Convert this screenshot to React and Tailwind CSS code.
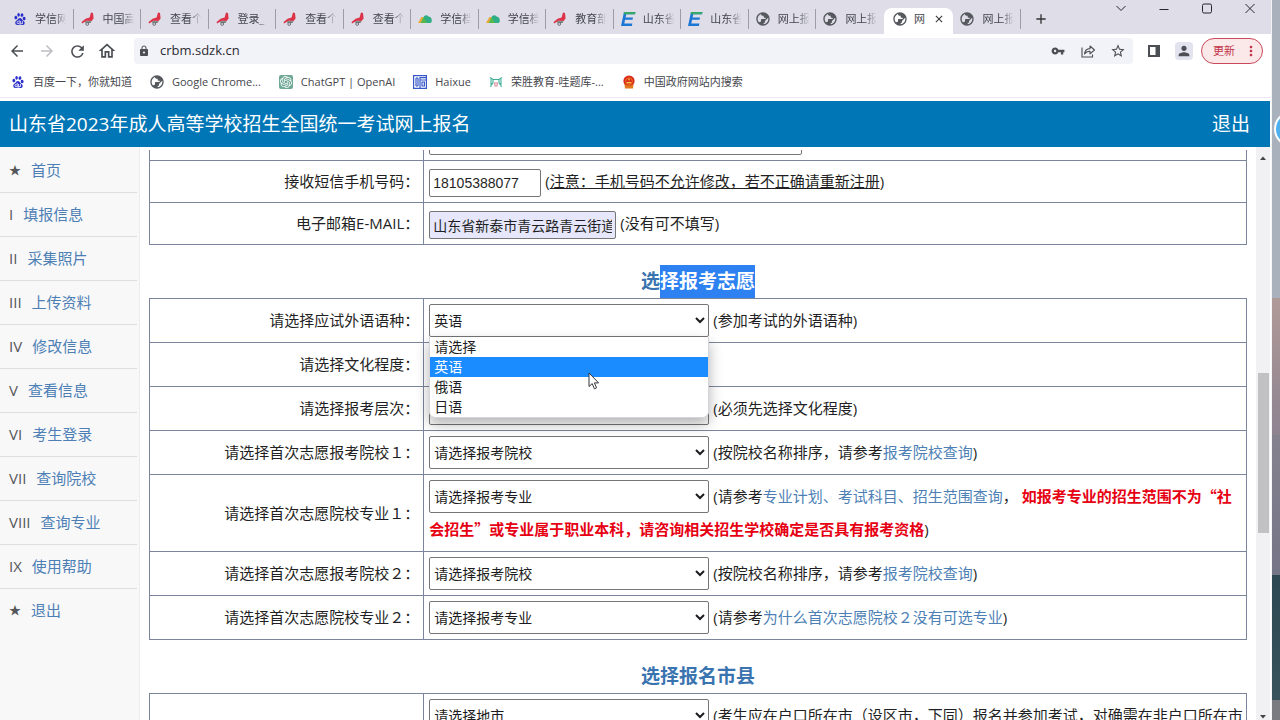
import React, { useState } from 'react';
import {
  MdArrowBack,
  MdArrowForward,
  MdRefresh,
  MdOutlineHome,
  MdLock,
  MdVpnKey,
  MdStarBorder,
  MdPublic,
  MdPerson,
  MdMoreVert,
  MdAdd,
  MdClose,
} from 'react-icons/md';
import { SiBaidu, SiOpenai } from 'react-icons/si';

// ---------- favicons ----------

function RedBirdIcon() {
  return (
    <svg className="w-3.5 h-3.5" viewBox="0 0 14 14">
      <path d="M10 0.4 L12 1 L12.6 6.4 L10.6 9 L5.8 8.8 L1 11.4 L0.6 10 L4.6 6.8 L8.6 5.4 Z" fill="#dc3348" />
      <path d="M4 9.2 H10.6 L9.4 11 H4.6 Z" fill="#6d7474" />
      <circle cx="6.2" cy="12" r="1.4" fill="none" stroke="#6d7474" strokeWidth="1" />
    </svg>
  );
}

function GreenHillIcon() {
  return (
    <svg className="w-3.5 h-3.5" viewBox="0 0 14 14">
      <path d="M0 11 L3.4 5 L5.4 5 L4 11 Z" fill="#e7a83a" />
      <path d="M3 11 L6 4.2 Q8.6 2 10.6 4.6 Q13.8 5.4 13.8 8.4 Q13.8 11 11.4 11 Z" fill="#2fae86" />
      <path d="M3 11 L5.4 5.6 L9 11 Z" fill="#57b947" />
    </svg>
  );
}

function BlueEIcon() {
  return (
    <svg className="w-4 h-4" viewBox="0 0 16 16">
      <path d="M4 1 H15.5 L14.9 3.2 H6.3 L5.6 6.4 H13 L12.5 8.8 H5.1 L4.3 12.6 H12.4 L11.8 15 H1 Z" fill="#1c77d4" />
      <path d="M4 1 H15.5 L14.9 3.2 H3.5 Z" fill="#35a86a" />
    </svg>
  );
}

function HaixueIcon() {
  return (
    <svg className="w-3.5 h-3.5" viewBox="0 0 14 14" fill="none" stroke="#3758c8" strokeWidth="1.2">
      <path d="M0.6 0.6 H13.4 V13.4 H0.6 Z" />
      <path d="M3 3 V11 M5 3 V11 M3 3 H5 M3 11 H5 M7 13 V2.6 H13 M7 5 H13 M9 7 H11.4 V11 H9 Z" />
    </svg>
  );
}

function QuizIcon() {
  return (
    <svg className="w-3.5 h-3.5" viewBox="0 0 14 14" fill="none" stroke="#3fae98" strokeWidth="1.1">
      <path d="M1 2.5 L4 4.5 H10 L13 2.5 M2 4 V12 M12 4 V12 M4 4.5 V8 L2 10 M10 4.5 V8 L12 10" />
      <path d="M5.6 8 H8.4 L8 11 H6 Z" stroke="#d98b9b" />
    </svg>
  );
}

function EmblemIcon() {
  return (
    <svg className="w-3.5 h-3.5" viewBox="0 0 14 14">
      <circle cx="7" cy="6" r="5.6" fill="#d8281c" />
      <path d="M2.4 9 Q7 12 11.6 9 L11 13.4 H3 Z" fill="#e07a1e" />
      <circle cx="7" cy="6.2" r="3.4" fill="none" stroke="#ee8a24" strokeWidth="0.8" />
      <path d="M4.8 7.6 H9.2 M7 3.8 V5.6" stroke="#ffd34d" strokeWidth="1.2" />
    </svg>
  );
}

const favicons = {
  baidu: <SiBaidu className="w-3 h-3.5 text-[#2b2fc9]" />,
  bird: <RedBirdIcon />,
  hill: <GreenHillIcon />,
  e: <BlueEIcon />,
  globe: <MdPublic className="w-4 h-4 text-[#55585d] -scale-x-100" />,
  gpt: (
    <span className="flex w-3.5 h-3.5 items-center justify-center rounded-xs bg-[#6fa896]">
      <SiOpenai className="w-3 h-3 text-white" />
    </span>
  ),
  haixue: <HaixueIcon />,
  quiz: <QuizIcon />,
  emblem: <EmblemIcon />,
};

// ---------- browser chrome ----------

const tabs = [
  { icon: 'baidu', title: '学信网' },
  { icon: 'bird', title: '中国高' },
  { icon: 'bird', title: '查看个' },
  { icon: 'bird', title: '登录_' },
  { icon: 'bird', title: '查看个' },
  { icon: 'bird', title: '查看个' },
  { icon: 'hill', title: '学信档' },
  { icon: 'hill', title: '学信档' },
  { icon: 'bird', title: '教育部' },
  { icon: 'e', title: '山东省' },
  { icon: 'e', title: '山东省' },
  { icon: 'globe', title: '网上报' },
  { icon: 'globe', title: '网上报' },
  { icon: 'globe', title: '网', active: true },
  { icon: 'globe', title: '网上报' },
];

const bookmarks = [
  { icon: 'baidu', title: '百度一下，你就知道' },
  { icon: 'globe', title: 'Google Chrome...' },
  { icon: 'gpt', title: 'ChatGPT | OpenAI' },
  { icon: 'haixue', title: 'Haixue' },
  { icon: 'quiz', title: '荣胜教育-哇题库-...' },
  { icon: 'emblem', title: '中国政府网站内搜索' },
];

function Tab({ icon, title, active, divider }) {
  return (
    <div
      className={
        active
          ? 'flex flex-1 min-w-0 self-stretch mt-1 pb-1 items-center rounded-t-lg bg-white pl-2'
          : 'flex flex-1 min-w-0 items-center pl-1.5'
      }
    >
      <span className="flex w-4 shrink-0 justify-center">{favicons[icon]}</span>
      <span
        className={
          active
            ? 'ml-1.5 text-[11px] leading-4 text-[#45464c]'
            : 'ml-[7px] w-[33px] shrink-0 whitespace-nowrap text-[11px] leading-4 text-[#45464c] mask-r-from-60% mask-r-to-95%'
        }
      >
        {title}
      </span>
      {active && (
        <button aria-label="关闭标签页" className="ml-2 text-[#333]">
          <MdClose className="w-3 h-3" />
        </button>
      )}
      {divider && <span className="ml-auto h-5 w-px bg-[#9d9da8]"></span>}
    </div>
  );
}

function TabStrip() {
  return (
    <div className="flex h-[34px] bg-[#dedde8]">
      <div className="flex flex-1 min-w-0 items-center pl-1.5 pt-1">
        {tabs.map((tab, i) => (
          <Tab key={i} {...tab} divider={i !== 12 && i !== 13} />
        ))}
      </div>
      <div className="flex w-[250px] shrink-0">
        <button aria-label="新标签页" className="flex w-10 items-center justify-center pt-1 text-[#333]">
          <MdAdd className="w-4 h-4" />
        </button>
        <div className="ml-auto flex h-4 text-[#26262c]">
          <button aria-label="搜索标签页" className="flex w-[43px] items-center justify-center">
            <svg className="w-3 h-3" viewBox="0 0 12 12" fill="none" stroke="currentColor">
              <path d="M1.5 4 L6 8.5 L10.5 4" />
            </svg>
          </button>
          <button aria-label="最小化" className="flex w-[43px] items-center justify-center">
            <svg className="w-3 h-3" viewBox="0 0 12 12" stroke="currentColor">
              <path d="M1.5 7.5 H10.5" />
            </svg>
          </button>
          <button aria-label="最大化" className="flex w-[43px] items-center justify-center">
            <svg className="w-3 h-3" viewBox="0 0 12 12" fill="none" stroke="currentColor">
              <rect x="1.5" y="2" width="9" height="9" rx="1.5" />
            </svg>
          </button>
          <button aria-label="关闭" className="flex w-[43px] items-center justify-center">
            <svg className="w-3 h-3" viewBox="0 0 12 12" fill="none" stroke="currentColor">
              <path d="M1.5 2 L10.5 11 M10.5 2 L1.5 11" />
            </svg>
          </button>
        </div>
      </div>
    </div>
  );
}

function AddressBar() {
  const [url, setUrl] = useState('crbm.sdzk.cn');

  return (
    <div className="flex h-[34px] items-center pl-0.5 pr-2 text-[#4b4e53]">
      <button aria-label="后退" className="flex w-[30px] justify-center">
        <MdArrowBack className="w-[18px] h-[18px]" />
      </button>
      <button aria-label="前进" className="flex w-[30px] justify-center text-[#bdbec4]">
        <MdArrowForward className="w-[18px] h-[18px]" />
      </button>
      <button aria-label="重新加载" className="flex w-[30px] justify-center">
        <MdRefresh className="w-[19px] h-[19px]" />
      </button>
      <button aria-label="主页" className="flex w-[30px] justify-center">
        <MdOutlineHome className="w-5 h-5" />
      </button>
      <div className="ml-3 flex h-[26px] flex-1 items-center rounded-sm bg-[#f2f2f9]">
        <MdLock className="ml-1 w-3 h-3" />
        <input
          aria-label="地址栏"
          value={url}
          onChange={(e) => setUrl(e.target.value)}
          className="ml-2.5 min-w-0 flex-1 bg-transparent text-[13px] text-[#2c2d31] outline-none"
        />
        <button aria-label="密码" className="flex w-[30px] justify-center">
          <MdVpnKey className="w-3.5 h-3.5" />
        </button>
        <button aria-label="分享" className="flex w-[30px] justify-center">
          <svg className="w-4 h-4" viewBox="0 0 16 16" fill="none" stroke="currentColor" strokeWidth="1.1">
            <path d="M2 4.5 V14 H12.5 V11.5" />
            <path d="M4.5 11 Q5 5.8 10 5.6 V3 L14.5 7 L10 10.8 V8.2 Q6.5 8 4.5 11 Z" strokeLinejoin="round" />
          </svg>
        </button>
        <button aria-label="收藏" className="flex w-[30px] justify-center">
          <MdStarBorder className="w-4 h-4" />
        </button>
      </div>
      <button aria-label="侧边栏" className="ml-1.5 flex w-[30px] justify-center">
        <svg className="w-4 h-4" viewBox="0 0 16 16">
          <path d="M2 2 H14 V14 H2 Z M4 4 V12 H9.5 V4 Z" fill="currentColor" fillRule="evenodd" />
        </svg>
      </button>
      <button aria-label="个人资料" className="flex w-[30px] justify-center">
        <span className="flex w-[18px] h-[18px] items-center justify-center rounded-sm bg-[#e2e3ee]">
          <MdPerson className="w-4 h-4" />
        </span>
      </button>
      <button className="ml-0.5 flex h-[26px] w-[62px] items-center rounded-full border border-[#c9485b] bg-[#fbe9ea] pl-[11px] text-[11px] text-[#c23347]">
        更新
        <MdMoreVert className="ml-2 w-4 h-4" />
      </button>
    </div>
  );
}

function BookmarkBar() {
  return (
    <div className="flex h-[30px] items-center gap-[17px] border-b border-[#efe6f8] pl-2.5 pb-0.5 text-[11px] leading-4 text-[#45464c]">
      {bookmarks.map((b) => (
        <a key={b.title} href="#" className="flex items-center gap-[7px] whitespace-nowrap">
          <span className="flex w-4 justify-center">{favicons[b.icon]}</span>
          <span>{b.title}</span>
        </a>
      ))}
    </div>
  );
}

// ---------- page ----------

const menu = [
  { mark: '★', text: '首页' },
  { mark: 'I', text: '填报信息' },
  { mark: 'II', text: '采集照片' },
  { mark: 'III', text: '上传资料' },
  { mark: 'IV', text: '修改信息' },
  { mark: 'V', text: '查看信息' },
  { mark: 'VI', text: '考生登录' },
  { mark: 'VII', text: '查询院校' },
  { mark: 'VIII', text: '查询专业' },
  { mark: 'IX', text: '使用帮助' },
  { mark: '★', text: '退出' },
];

function SideMenu() {
  return (
    <nav className="w-[140px] shrink-0 border-r border-[#ececf0] bg-[#f8f8f9] pt-0.5">
      <ul>
        {menu.map((m, i) => (
          <li
            key={i}
            className={
              i === menu.length - 1
                ? 'flex h-11 items-center gap-2.5 pb-px pl-[9px]'
                : 'mr-0.5 flex h-11 items-center gap-2.5 border-b border-[#dfdfe2] pl-[9px]'
            }
          >
            <span className={m.mark === '★' ? 'text-xs text-[#55565a]' : 'text-[#55565a]'}>{m.mark}</span>
            <a href="#" className="text-[#4d7fb5]">{m.text}</a>
          </li>
        ))}
      </ul>
    </nav>
  );
}

function FormTable({ children }) {
  return (
    <table className="w-full table-fixed border-collapse">
      <colgroup>
        <col className="w-1/4" />
        <col />
      </colgroup>
      <tbody>{children}</tbody>
    </table>
  );
}

function Row({ id, label, compact, children }) {
  return (
    <tr>
      <th
        scope="row"
        className="border border-[#7b869c] pr-1 text-right font-normal leading-[33px]"
      >
        <label htmlFor={id}>{label}</label>
      </th>
      <td
        className={
          compact
            ? 'border border-[#7b869c] pl-[5px] py-1 leading-[33px]'
            : 'relative border border-[#7b869c] pl-[5px] py-[5px] leading-[33px]'
        }
      >
        {children}
      </td>
    </tr>
  );
}

function Select({ id, options, value }) {
  const [current, setCurrent] = useState(value || options[0]);

  return (
    <select
      id={id}
      value={current}
      onChange={(e) => setCurrent(e.target.value)}
      className="mr-1 h-[33px] w-[280px] rounded-xs border border-[#767676] bg-white align-top text-sm text-[#1c1c20]"
    >
      {options.map((o) => (
        <option key={o}>{o}</option>
      ))}
    </select>
  );
}

function PageLink({ children }) {
  return <a href="#" className="text-[#4d7fb5]">{children}</a>;
}

const languages = ['请选择', '英语', '俄语', '日语'];

function LanguageList() {
  return (
    <div className="absolute left-[5px] top-[38px] z-10 w-[280px] rounded-b-md border border-t-0 border-[#d4d4da] bg-white shadow-[0_6px_14px_rgba(0,0,0,0.3)]">
      <ul role="listbox" aria-label="外语语种" className="text-sm leading-5">
        {languages.map((l) => (
          <li
            key={l}
            role="option"
            aria-selected={l === '英语'}
            className={l === '英语' ? 'bg-[#1a8cff] pl-1 text-white' : 'pl-1'}
          >
            {l}
          </li>
        ))}
      </ul>
      <svg className="absolute left-[158px] top-[35px] w-3 h-[18px]" viewBox="0 0 12 18">
        <path
          d="M1 1 V14.5 L4.2 11.6 L6.4 16.8 L8.6 15.8 L6.4 10.9 H10.6 Z"
          fill="#fff"
          stroke="#33343a"
          strokeWidth="1"
        />
      </svg>
    </div>
  );
}

function SignUpForm() {
  const [address, setAddress] = useState('');
  const [phone, setPhone] = useState('18105388077');
  const [email, setEmail] = useState('山东省新泰市青云路青云街道');

  return (
    <main className="mt-[3px] ml-[9px] mr-[9px] min-w-0 flex-1 overflow-hidden">
      {/* the page is scrolled, so the first row is cut by the header */}
      <div className="-mt-8">
        <FormTable>
          <Row id="address" compact>
            <input
              id="address"
              aria-label="通讯地址"
              value={address}
              onChange={(e) => setAddress(e.target.value)}
              className="h-7 w-[373px] rounded-xs border border-[#767676] px-[3px] align-middle text-sm"
            />
          </Row>
          <Row id="phone" label="接收短信手机号码：" compact>
            <input
              id="phone"
              value={phone}
              onChange={(e) => setPhone(e.target.value)}
              className="mr-1 h-7 w-28 rounded-xs border border-[#767676] px-[3px] align-middle font-['Liberation_Sans',sans-serif] text-sm"
            />
            (<u>注意：手机号码不允许修改，若不正确请重新注册</u>)
          </Row>
          <Row id="email" label="电子邮箱E-MAIL：" compact>
            <input
              id="email"
              value={email}
              onChange={(e) => setEmail(e.target.value)}
              className="mr-1 h-7 w-[187px] rounded-xs border border-[#767676] bg-[#e6e7fa] px-[3px] align-middle text-sm"
            />
            (没有可不填写)
          </Row>
        </FormTable>
      </div>

      <h2 className="mt-5 text-center text-[19px] leading-[33px] font-bold text-[#3a74b0]">
        选<span className="inline-block bg-[#2d81f0] text-white">择报考志愿</span>
      </h2>
      <FormTable>
        <Row id="language" label="请选择应试外语语种：">
          <Select id="language" options={languages} value="英语" />
          (参加考试的外语语种)
          <LanguageList />
        </Row>
        <Row id="education" label="请选择文化程度：">
          <Select id="education" options={['']} />
        </Row>
        <Row id="level" label="请选择报考层次：">
          <Select id="level" options={['']} />
          (必须先选择文化程度)
        </Row>
        <Row id="school1" label="请选择首次志愿报考院校１：">
          <Select id="school1" options={['请选择报考院校']} />
          (按院校名称排序，请参考<PageLink>报考院校查询</PageLink>)
        </Row>
        <Row id="major1" label="请选择首次志愿院校专业１：">
          <Select id="major1" options={['请选择报考专业']} />
          (请参考<PageLink>专业计划、考试科目、招生范围查询</PageLink>，{' '}
          <b className="font-['Noto_Sans_CJK_SC',sans-serif] font-bold leading-5 text-[#e60012]">
            如报考专业的招生范围不为“社会招生”或专业属于职业本科，请咨询相关招生学校确定是否具有报考资格
          </b>
          )
        </Row>
        <Row id="school2" label="请选择首次志愿报考院校２：">
          <Select id="school2" options={['请选择报考院校']} />
          (按院校名称排序，请参考<PageLink>报考院校查询</PageLink>)
        </Row>
        <Row id="major2" label="请选择首次志愿院校专业２：">
          <Select id="major2" options={['请选择报考专业']} />
          (请参考<PageLink>为什么首次志愿院校２没有可选专业</PageLink>)
        </Row>
      </FormTable>

      <h2 className="mt-5 text-center text-[19px] leading-[33px] font-bold text-[#3a74b0]">选择报名市县</h2>
      <FormTable>
        <Row id="city">
          <Select id="city" options={['请选择地市']} />
          (考生应在户口所在市（设区市，下同）报名并参加考试，对确需在非户口所在市
        </Row>
      </FormTable>
    </main>
  );
}

function ScrollBar() {
  return (
    <div className="flex w-3.5 shrink-0 flex-col items-center bg-[#f1f0f3]" aria-hidden="true">
      <svg className="w-2 h-[22px] shrink-0" viewBox="0 0 8 22">
        <path d="M1 13 L4 9.5 L7 13 Z" fill="#444" />
      </svg>
      <div className="grow-[204]"></div>
      <div className="w-[11px] grow-[160] bg-[#c1c1c3]"></div>
      <div className="grow-[179]"></div>
      <svg className="w-2 h-2 shrink-0" viewBox="0 0 8 8">
        <path d="M1 3 L4 6.5 L7 3 Z" fill="#444" />
      </svg>
    </div>
  );
}

// strip of wallpaper left uncovered by the window
function Desktop() {
  return (
    <div className="relative w-2 shrink-0 overflow-hidden bg-[#a9b1bc]">
      <div className="flex h-full flex-col">
        <div className="grow-[298]"></div>
        <div className="grow-[137] bg-linear-to-b from-[#b09a98] to-[#8d8390]"></div>
        <div className="grow-[140] bg-linear-to-b from-[#85828f] to-[#747587]"></div>
        <div className="grow-[125] bg-linear-to-b from-[#2d4852] to-[#39545c]"></div>
        <div className="grow-[20] bg-[#7b7c82]"></div>
      </div>
      <div className="absolute left-0.5 top-[111px] w-9 h-9 rounded-full border-2 border-white bg-[#4fb0ee]"></div>
    </div>
  );
}

function App() {
  return (
    <div
      lang="zh-CN"
      className="flex h-screen overflow-hidden font-['Open_Sans','Noto_Sans_CJK_SC',sans-serif] text-[15px] text-[#1f1f24]"
    >
      <div className="flex min-w-0 flex-1 flex-col border-r border-[#f4f4f6] bg-white">
        <TabStrip />
        <AddressBar />
        <BookmarkBar />
        <div className="mt-[3px] mr-px flex h-[46px] shrink-0 items-center justify-between bg-[#0076b6] pl-[9px] pr-5 text-[19px] text-white">
          <h1>山东省2023年成人高等学校招生全国统一考试网上报名</h1>
          <a href="#">退出</a>
        </div>
        <div className="mr-px flex min-h-0 flex-1">
          <SideMenu />
          <SignUpForm />
          <ScrollBar />
        </div>
      </div>
      <Desktop />
    </div>
  );
}

export default App;
